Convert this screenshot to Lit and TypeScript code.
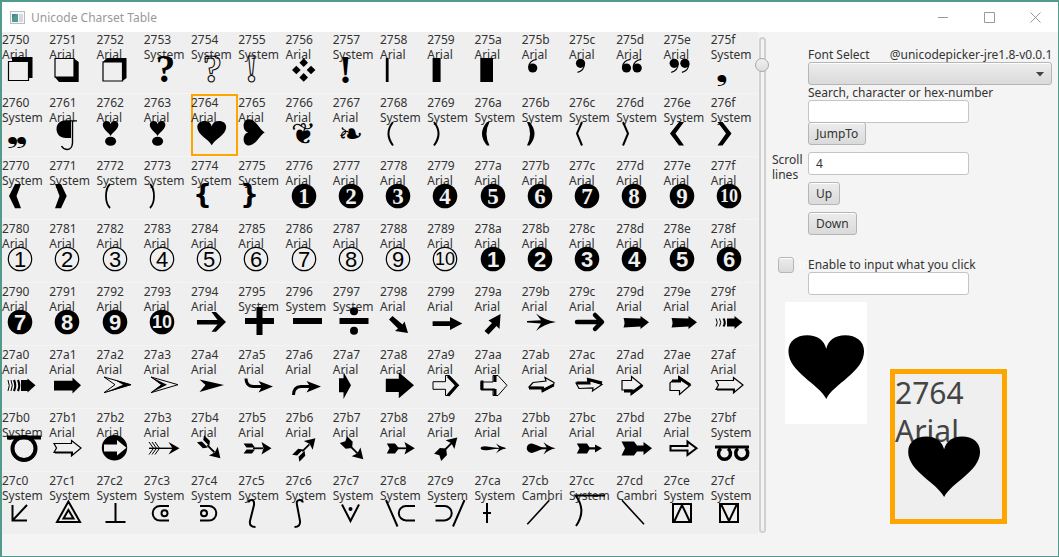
import { LitElement, html, svg, css, TemplateResult } from "lit";
import { customElement, property, state } from "lit/decorators.js";
import { classMap } from "lit/directives/class-map.js";

const FIRST = 0x2750;
const COUNT = 128;

/* Characters that come from the system fallback font rather than Arial. */
const SYSTEM = new Set([
  0x2753, 0x2754, 0x2755, 0x2757, 0x275f, 0x2760, 0x2768, 0x2769, 0x276a, 0x276b, 0x276c, 0x276d, 0x276e,
  0x276f, 0x2770, 0x2771, 0x2772, 0x2773, 0x2774, 0x2775, 0x2795, 0x2796, 0x2797, 0x27b0, 0x27bf, 0x27c0,
  0x27c1, 0x27c2, 0x27c3, 0x27c4, 0x27c5, 0x27c6, 0x27c7, 0x27c8, 0x27c9, 0x27ca, 0x27cc, 0x27ce, 0x27cf,
]);
const CAMBRIA = new Set([0x27cb, 0x27cd]);

/* f: filled shape, s: stroked line of a given weight, spin: turned about the arrow's middle. */
const f = (d: string) => svg`<path class="solid" d=${d}/>`;
const s = (d: string, weight = 2) => svg`<path d=${d} stroke-width=${weight}/>`;
const dot = (x: number, y: number, r: number) => svg`<circle class="solid" cx=${x} cy=${y} r=${r}/>`;
const spin = (deg: number, shape: TemplateResult) => svg`<g transform="rotate(${deg} 19.4 39.3)">${shape}</g>` as TemplateResult;

const HEART = "M38 64C31 49 0 37 0 16C0 6 8 0 19 0C29 0 36 5 38 13.5C40 5 47 0 57 0C68 0 76 6 76 16C76 37 45 49 38 64Z";
const heart = (transform: string) => svg`<path class="solid" d=${HEART} transform=${transform}/>`;
const heartMark = svg`${heart("translate(5.8 27) scale(.205 .235)")}<ellipse class="solid" cx="13.6" cy="47.3" rx="5.5" ry="4.5"/>`;

const quoteLow = (x: number) => svg`${dot(x, 37, 4.6)}${s(`M${x - 4} 36Q${x - 3.5} 29.5 ${x + 4} 28.3`, 1.2)}`;
const quoteHigh = (x: number) => svg`${dot(x, 32.3, 4.6)}${s(`M${x + 4} 33Q${x + 3.5} 40 ${x - 3} 41.3`, 1.2)}`;

const disc = (n: number, kind: "serif" | "sans" | "bold") => svg`
  <circle class=${kind === "sans" ? "ring" : "solid"} cx="18" cy="39" r=${kind === "sans" ? 11.7 : 12.3}/>
  <text class="digit ${kind} ${n > 9 ? "two" : ""}" x="18" y=${n > 9 ? 45 : 47}>${n}</text>`;

const blockArrow = "M7.5 35L24.500 35.5V33L33 39.3L24.500 46V43.500L7.500 44.500Q9.500 40 7.500 35Z";
const hookHead = "M20.500 35L35 40.500L20.500 46.500L24 40.500Z";
const openArrow = svg`${s("M5 34.5H22.500V31.5L32 39L22.500 47V43.500H5L7.500 39Z", 1.2)}${s("M6 43.5H23V46", 2)}`;
const thinFletch = svg`${f("M5.600 34.5H14L17 38.500H8.500ZM5.600 44.5H14L17 40.500H8.500Z")}${s("M15 39.3H25", 1.8)}${f("M23.500 33L33.500 39.3L23.500 45.500L25.500 39.300Z")}`;
const fullFletch = svg`${f("M6.800 34.5H15L19 39.3L15 44.500H6.800L9.500 39.300Z")}${s("M17 39.3H27", 1.8)}${f("M24.500 33L34.800 39.3L24.500 45.500L26.500 39.300Z")}`;

/* Symbols drawn in the coordinates of a 47 x 62 cell. */
const DRAWN: Record<number, unknown> = {
  0x2750: [f("M10 26H30.5V47H27V30H10Z"), s("M6.5 30.5H26.5V49.5H6.5Z", 1.2)],
  0x2751: [f("M5.7 46L10 51H29.7V31L25 27.5V46Z"), s("M6 27.5H25V46H6Z", 1.2)],
  0x2752: [f("M5.8 31L10 27H29.5V47L25.5 50V31Z"), s("M6 31H25.5V50H6Z", 1.2)],
  0x2753: svg`<text class="mark" x="21.500" y="50.500">?</text>`,
  0x2754: svg`<text class="mark hollow" x="21.500" y="50.500">?</text>`,
  0x2755: svg`<text class="mark hollow" x="13.500" y="50.500">!</text>`,
  0x2756: f("M17.7 27.3L22 31.7L17.7 36L13.4 31.7ZM17.7 42L22 46.4L17.7 50.7L13.4 46.4ZM10.300 34.7L14.700 39L10.300 43.300L6 39ZM25 34.7L29.400 39L25 43.300L20.700 39Z"),
  0x2757: svg`<text class="mark" x="12.500" y="51.500">!</text>`,
  0x2758: f("M5.8 27H8.6V51H5.8Z"),
  0x2759: f("M5.6 27H13.6V51H5.6Z"),
  0x275a: f("M5.3 27H18V51H5.3Z"),
  0x275b: quoteLow(10.7),
  0x275c: quoteHigh(11.5),
  0x275d: [quoteLow(10.5), quoteLow(21.2)],
  0x275e: [quoteHigh(10.2), quoteHigh(20.9)],
  0x2761: [f("M28 26.3H17C11 26.3 7.5 30 7.5 35C7.5 40 11 44 17 44H22V27.5H28Z"), s("M23.5 27V49Q23 55.500 18 55.500Q14 55 12.500 52", 1.4)],
  0x2762: heartMark,
  0x2763: heartMark,
  0x2764: heart("translate(6.3 27) scale(.38)"),
  0x2765: heart("translate(5.6 51.5) scale(.33 .345) rotate(-90)"),
  0x2768: s("M13 28Q4 39.5 13 51.5"),
  0x2769: s("M7 28Q16 39.5 7 51.5"),
  0x276a: f("M14.5 28H12Q2 39.5 12 51.5H14.5Q8.5 39.5 14.5 28Z"),
  0x276b: f("M5 28H7.500Q17.500 39.5 7.500 51.5H5Q11 39.5 5 28Z"),
  0x276c: s("M13 28L8 39.5L13 51.5"),
  0x276d: s("M7 28L12 39.5L7 51.5"),
  0x276e: f("M15 28H20L11.5 39.5L20 51.5H15L6 39.5Z"),
  0x276f: f("M6.5 28H11.5L20.5 39.5L11.5 51.5H6.5L15 39.5Z"),
  0x2770: f("M13 27H19L14.5 39L19 51.3H13L7 39Z"),
  0x2771: f("M6 27H12L17.7 39L12 51.3H6L10.5 39Z"),
  0x2772: s("M13 27Q9 31 9 39Q9 47 13 51", 1.8),
  0x2773: s("M6 27Q10 31 10 39Q10 47 6 51", 1.8),
  0x2774: svg`<text class="brace" x="11.500" y="46">{</text>`,
  0x2775: svg`<text class="brace" x="11.500" y="46">}</text>`,
  0x2794: f("M6 37H26.5L20.5 29H25L35 39L25 48.7H20.5L26.5 41.5H6Z"),
  0x2795: s("M7 38H36M21.5 24V52", 6),
  0x2796: s("M7 38H36", 6),
  0x2797: [s("M6.5 38H35.5", 6), dot(21, 28.3, 4), dot(21, 47.7, 4)],
  0x2798: f("M9 36.5L12.5 33L22.5 41.5L24.5 38.5L28 50L15 48L18 45.5Z"),
  0x2799: f("M5.6 38.3H23V34L35.3 40.5L23 47V43H5.6Z"),
  0x279a: f("M9.5 48L13.5 51.5L21.500 43L24.5 46L25.6 31L13.5 37.500L17 40Z"),
  0x279b: f("M5 38L19 37.3L14 30.5Q22 37 34 39Q22 41 14 48L19 40.5L5 39.5Z"),
  0x279c: svg`<g class="round">${s("M8 39H32M26 32L33 39L26 46", 4.5)}</g>`,
  0x279d: f(blockArrow),
  0x279e: f(blockArrow),
  0x279f: [f("M16 35.5H23.5V33L31.5 39.3L23.500 46V43.5H16Z"), s("M5 35.5Q7.5 39.5 5 43.5M8.500 35.5Q11 39.5 8.500 43.5", 1), s("M12.5 35.500Q15 39.5 12.5 43.500", 2)],
  0x27a0: [f("M19 34H25.5V32.5L33.500 39.3L25.500 46.5V45H19Z"), s("M6 34Q8.500 39.5 6 45M9 34Q11.500 39.5 9 45", 1), s("M12 34Q14.500 39.5 12 45M16 34Q18.500 39.5 16 45", 2.2)],
  0x27a1: f("M5 34.7H23.5V31.5L32 39.3L23.5 47.5V44.5H5Z"),
  0x27a2: [s("M7 31L34 38.7L7 46.7L18 38.7Z", 1), f("M17 33.5L34.500 38.7L7 47L26 38.7Z")],
  0x27a3: [s("M7 31L34 38.7L7 46.7L18 38.7Z", 1), f("M7 31L23 38.7L7 46.7L17 38.7Z")],
  0x27a4: f("M8.5 33.5L33 39L8.5 46L14.5 39Z"),
  0x27a5: [s("M8 32.5Q8 40 15 40.5H26", 3), f(hookHead)],
  0x27a6: [s("M7.5 49Q7.5 41 15 40.5H26", 3), f(hookHead)],
  0x27a7: f("M6 32.3H10.5V26L18 39.3L10.5 53V46.3H6Z"),
  0x27a8: f("M5.8 32.7H18.8V26.3L34 39.3L18.8 52.3V46H5.8Z"),
  0x27a9: [s("M6 35.7H18.5V29.5H22L31.500 39.3L22 49.5H18.5V43.3H6Z", 1), s("M21 30L30 39.3L21 49.500", 3.2)],
  0x27aa: [s("M6 36H18V29.500H23L32 39.3L23 49.500H18V43.5H6Z", 1), s("M7 34.500V44M20 29.5V36M20 49.5V43", 3), s("M6 43.500H20", 2)],
  0x27ab: [s("M7 41L11 36.5L24 35L23 31.5L32 36.500L31.500 39.5L20.500 45L21.500 41.500Z", 1.2), s("M7 42H20.500L21 44.500L31.5 39", 3)],
  0x27ac: [s("M7 37L10 42.5L24 42L23.5 45L33 38.5L19 34L20 37Z", 1.2), s("M7.500 37H20L19.500 33.500L33 37", 3)],
  0x27ad: [s("M6 34.5H15.5V30.5L26.5 39.5L15.5 48V44H6Z", 1.2), s("M8 45H16V47L26 39.500", 3)],
  0x27ae: [s("M6 44.5H15.5V48.500L26.5 39L15.5 31V35H8L6 37Z", 1.2), s("M8 35H15.500V32L26 39", 3)],
  0x27af: openArrow,
  0x27b0: [s("M5 28.500H39", 4), svg`<circle cx="22" cy="39.500" r="11.500" stroke-width="4"/>`],
  0x27b1: openArrow,
  0x27b2: [dot(17.5, 38.7, 12.7), svg`<path class="cut" d="M7 35.500H20V31L29.500 38.700L20 46.500V42.500H7Z"/>`],
  0x27b3: [s("M5 39.3H31", 1.4), s("M5 33L9.5 39.300L5 45.5M8 33L12.5 39.300L8 45.5M11 33L15.500 39.300L11 45.5", 1), f("M24.500 33L35.5 39.3L24.500 45.500L28.5 39.3Z")],
  0x27b4: spin(45, thinFletch),
  0x27b5: thinFletch,
  0x27b6: spin(-45, thinFletch),
  0x27b7: spin(45, fullFletch),
  0x27b8: fullFletch,
  0x27b9: spin(-45, fullFletch),
  0x27ba: [f("M5.6 39.3Q6 36.5 14 37.7L24 39.3L14 41Q6 42 5.6 39.3Z"), s("M18 39.3H30", 1), f("M21 34.5Q25 38 31.5 39.3Q25 40.5 21 44.5L24.5 39.3Z")],
  0x27bb: [f("M4.700 39.3Q5 34.500 10 34.500Q15 36 22 39.3Q15 42.500 10 44Q5 43.500 4.700 39.300Z"), s("M18 39.3H28"), f("M21.500 33Q26 37.500 33.500 39.3Q26 41 21.500 45.5L25 39.300Z")],
  0x27bc: f("M7.8 34.500H18L20.5 38.3H26V35.500L33 39.3L26 43.500V40.5H20.5L18 44.5H7.8L10.5 39.3Z"),
  0x27bd: f("M5.5 32.5H18L21 36.5H27.5V33L36 39.3L27.5 46V42.5H21L18 46.5H5.5L9 39.3Z"),
  0x27be: s("M6.5 37H23.5V32.5L32.5 39.3L23.5 46V41.5H6.5Z"),
  0x27bf: [s("M4 38H38", 3), s("M10 39.5A6 6 0 1 0 17 39.5M27 39.5A6 6 0 1 0 34.5 39.5", 3.5)],
  0x27c0: s("M10.5 33V48.5H25M25 33L10.5 48.5"),
  0x27c1: s("M19.4 29.500L8 50H31ZM19.4 38L14.500 46.5H24.500Z"),
  0x27c2: s("M18.5 31V50M8.5 50H28.5"),
  0x27c3: [s("M25 34H16A7.3 7.3 0 0 0 16 48.6H25"), svg`<circle cx="20.500" cy="41.300" r="3"/>`],
  0x27c4: [s("M9 34H18A7.3 7.3 0 0 1 18 48.6H9"), svg`<circle cx="13" cy="41.300" r="3"/>`],
  0x27c5: s("M10.5 30.5Q10.5 28 13.5 28Q16.5 28 16 33L12 49Q11 55 17.5 55"),
  0x27c6: s("M16.7 30.5Q16.7 28 13.7 28Q10 28 11 33L14 49Q14.5 55 8.5 55"),
  0x27c7: [s("M9 32.5L17.5 49L26 32.5"), dot(17.5, 37, 2)],
  0x27c8: s("M6 28L17.5 54.5M35 34H26A7.2 7.2 0 0 0 26 48.4H35"),
  0x27c9: s("M37.5 28L26 54.5M8.5 34H17.5A7.2 7.2 0 0 1 17.5 48.4H8.5"),
  0x27ca: s("M12 31V51M8 41H16"),
  0x27cb: s("M5.3 52.3L27.3 28.3", 1.6),
  0x27cc: s("M36 23.5H6.5Q18 38 7 54"),
  0x27cd: s("M6 28.3L28 52.3", 1.6),
  0x27ce: s("M9 32H27V50H9ZM10 50L18 33L26 50"),
  0x27cf: s("M9 32H27V50H9ZM10 32L18 49L26 32"),
};
for (let n = 1; n <= 10; n++) {
  DRAWN[0x2775 + n] = disc(n, "serif");
  DRAWN[0x277f + n] = disc(n, "sans");
  DRAWN[0x2789 + n] = disc(n, "bold");
}

const fontOf = (code: number) => (CAMBRIA.has(code) ? "Cambri" : SYSTEM.has(code) ? "System" : "Arial");

const symbolStyles = css`
  .drawn { display: block; overflow: visible; fill: none; stroke: #000; stroke-width: 2; }
  .solid { fill: #000; stroke: none; }
  .ring { stroke-width: 1.2; }
  .cut { fill: #efefef; stroke: none; }
  .round { stroke-linecap: round; stroke-linejoin: round; }
  .mark { font: bold 39px "Liberation Serif", serif; text-anchor: middle; fill: #000; stroke: none; }
  .brace { font: bold 26px "DejaVu Sans", sans-serif; text-anchor: middle; fill: #000; stroke: none; }
  .hollow { fill: none; stroke: #000; stroke-width: 1; }
  .digit { text-anchor: middle; stroke: none; fill: #efefef; }
  .serif { font: bold 23px "Liberation Serif", serif; }
  .sans { font: 22px "Liberation Sans", sans-serif; fill: #000; }
  .bold { font: bold 22px "Liberation Sans", sans-serif; }
  .two { font-size: 18px; }
  .typed { font: 30px "DejaVu Sans", "Noto Sans CJK SC", sans-serif; fill: #000; stroke: none; }
`;

/* One character, from its drawing or from the font, seen through a window of the cell. */
const symbol = (code: number, view: string) =>
  DRAWN[code]
    ? html`<svg class="drawn" viewBox=${view} aria-hidden="true">${DRAWN[code]}</svg>`
    : html`<svg class="drawn" viewBox=${view}><text x="5" y="49.500" class="typed">${String.fromCodePoint(code)}</text></svg>`;

@customElement("char-cell")
export class CharCell extends LitElement {
  @property({ type: Number }) code = FIRST;
  @property({ type: Boolean, reflect: true }) selected = false;

  static styles = [
    symbolStyles,
    css`
      :host { display: grid; min-width: 0; }
      .cell {
        display: grid;
        align-items: end;
        justify-items: start;
        min-width: 0;
        margin: 0;
        padding: 0;
        border: 0;
        background: #efefef;
        font: 12px/15px "Noto Sans", sans-serif;
        text-align: left;
        color: #333;
      }
      .on { box-shadow: inset 0 0 0 2px #ffa500; }
      .label, .drawn { grid-area: 1 / 1; height: 61px; }
      .label { white-space: pre; }
      .drawn { width: 47px; }
    `,
  ];

  render() {
    return html`<button class=${classMap({ cell: true, on: this.selected })} type="button">
      <span class="label">${this.code.toString(16)}<br />${fontOf(this.code)}</span>
      ${symbol(this.code, "0 1 47 61")}
    </button>`;
  }
}

@customElement("app-root")
export class AppRoot extends LitElement {
  @state() private current = 0x2764;

  static styles = [
    symbolStyles,
    css`
      * { box-sizing: border-box; }
      :host {
        display: flex;
        flex-direction: column;
        min-height: 100vh;
        box-sizing: border-box;
        border: solid #529a8c;
        border-width: 2px 1px 1px 2px;
        background: #f4f4f4;
        color: #333;
        font: 12px/15px "Noto Sans", sans-serif;
      }
      .title { display: flex; align-items: center; height: 30px; padding-left: 8px; background: #fff; color: #999; }
      .title h1 { flex: 1; margin: 0 0 0 6px; font: inherit; }
      .title svg { display: block; }
      .win { display: grid; place-items: center; width: 46px; height: 30px; padding: 0; border: 0; background: none; }
      .win svg { fill: none; stroke: #999; }
      .main { display: grid; grid-template-columns: minmax(0, 756fr) 14px minmax(0, 286fr); align-items: start; }
      .table {
        display: grid;
        grid-template-columns: repeat(16, minmax(0, 1fr));
        grid-template-rows: 61px repeat(7, 62px);
        row-gap: 1px;
      }
      .scroll {
        writing-mode: vertical-lr;
        appearance: none;
        width: 14px;
        height: 496px;
        margin: 5px 0 0 -3px;
        background: none;
      }
      .scroll::-webkit-slider-runnable-track {
        width: 7px;
        height: 496px;
        border: 2px solid #d0d0d0;
        border-radius: 4px;
        background: #f4f4f4;
      }
      .scroll::-webkit-slider-thumb {
        appearance: none;
        width: 14px;
        height: 14px;
        margin-left: -6px;
        border: 1px solid #a8a8a8;
        border-radius: 50%;
        background: linear-gradient(#f0f0f0, #dedede);
      }
      .panel { padding: 15px 6px 0 0; }
      .row { display: grid; grid-template-columns: 36px minmax(0, 1fr); }
      .field { grid-column: 2; }
      .heading { display: flex; gap: 20px; white-space: nowrap; }
      label { display: block; }
      .pick { position: relative; }
      select, .text, .push, .tick {
        display: block;
        height: 23px;
        margin: 0;
        border: 1px solid #b5b5b5;
        border-radius: 3px;
        color: #333;
        font: inherit;
      }
      select, .push, .tick { background: linear-gradient(#ececec, #dadada); box-shadow: inset 0 1px 0 #fff; }
      select { appearance: none; width: 100%; }
      .arrow { position: absolute; right: 8px; top: 10px; pointer-events: none; }
      .text { width: 161px; max-width: 100%; padding: 0 7px; border-color: #c4c4c4; background: #fff; }
      .push { padding: 0 7px; }
      .jump { margin-top: -1px; }
      .scrolling { margin-top: 7px; }
      .steps { display: grid; gap: 7px; justify-items: start; margin-top: 7px; }
      .enable { margin-top: 22px; }
      .tick { flex: none; appearance: none; width: 16px; height: 16px; margin-left: 6px; }
      .mark-row { display: flex; gap: 4px; color: #fcfcfc; }
      .views { display: flex; align-items: flex-start; gap: 23px; margin: 7px 0 0 13px; }
      .preview { width: 82px; height: 122px; background: #fff; }
      .magnified {
        display: grid;
        width: 117px;
        height: 155px;
        margin-top: 67px;
        border: 5px solid #ffa500;
        background: #efefef;
        color: #444;
        font: 30px/38px "Noto Sans", sans-serif;
      }
      .magnified span, .magnified .drawn { grid-area: 1 / 1; white-space: pre; }
      .magnified .drawn { width: 107px; height: 145px; }
      .preview .drawn { width: 82px; height: 122px; }
    `,
  ];

  render() {
    const codes = Array.from({ length: COUNT }, (_, i) => FIRST + i);
    return html`
      <header class="title">
        <svg width="15" height="13" viewBox="0 0 15 13" aria-hidden="true">
          <rect x=".5" y=".5" width="14" height="12" fill="#f8f8f8" stroke="#b5bcc2" />
          <rect x="2" y="3" width="6" height="8" fill="#4f9b8d" /><path d="M2 3H6L2 8Z" fill="#4e7f9f" />
          <rect x="9" y="3" width="4" height="8" fill="#d5dade" />
        </svg>
        <h1>Unicode Charset Table</h1>
        <button class="win" type="button" aria-label="Minimize"><svg width="11" height="11"><path d="M0 5.500H10" /></svg></button>
        <button class="win" type="button" aria-label="Maximize"><svg width="11" height="11"><path d="M.5 .5H10.500V10.500H.5Z" /></svg></button>
        <button class="win" type="button" aria-label="Close"><svg width="11" height="11"><path d="M.5 .5L10.500 10.500M10.500 .5L.5 10.500" /></svg></button>
      </header>
      <main class="main">
        <div class="table">
          ${codes.map(
            (code) => html`<char-cell .code=${code} ?selected=${code === this.current} @click=${() => (this.current = code)}></char-cell>`
          )}
        </div>
        <input class="scroll" type="range" min="0" max="100" value="4" aria-label="Scroll position" />
        <section class="panel">
          <div class="row">
            <div class="field heading"><label for="font">Font Select</label><span>@unicodepicker-jre1.8-v0.0.1</span></div>
            <div class="field pick">
              <select id="font"></select>
              <svg class="arrow" width="8" height="5" viewBox="0 0 8 5" aria-hidden="true"><path d="M0 0H8L4 4.500Z" fill="#444" /></svg>
            </div>
            <label class="field" for="search">Search, character or hex-number</label>
            <input class="field text" id="search" type="text" />
            <div class="field jump"><button class="push" type="button">JumpTo</button></div>
          </div>
          <div class="row scrolling">
            <label for="lines">Scroll lines</label>
            <div>
              <input class="text" id="lines" type="text" value="4" />
              <div class="steps"><button class="push" type="button">Up</button><button class="push" type="button">Down</button></div>
            </div>
          </div>
          <div class="row enable">
            <div class="mark-row"><input class="tick" id="enable" type="checkbox" /><span>In</span></div>
            <div><label for="enable">Enable to input what you click</label><input class="text" type="text" aria-label="Clicked characters" /></div>
          </div>
          <div class="views">
            <div class="preview">${symbol(this.current, "5 14.300 31.300 46.600")}</div>
            <div class="magnified">
              <span>${this.current.toString(16)}<br />${fontOf(this.current)}</span>
              ${symbol(this.current, "1 2 43 58")}
            </div>
          </div>
        </section>
      </main>
    `;
  }
}
